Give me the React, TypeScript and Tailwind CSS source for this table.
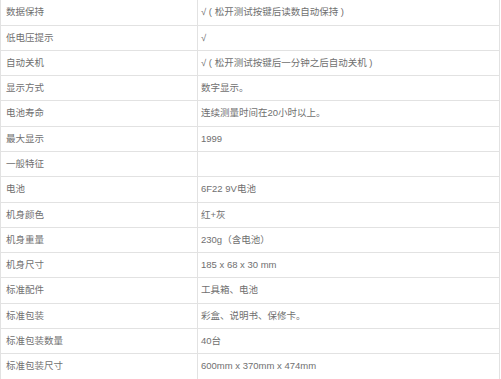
const rows: [string, string][] = [
  ['数据保持', '√ ( 松开测试按键后读数自动保持 )'],
  ['低电压提示', '√'],
  ['自动关机', '√ ( 松开测试按键后一分钟之后自动关机 )'],
  ['显示方式', '数字显示。'],
  ['电池寿命', '连续测量时间在20小时以上。'],
  ['最大显示', '1999'],
  ['一般特征', ''],
  ['电池', '6F22 9V电池'],
  ['机身颜色', '红+灰'],
  ['机身重量', '230g（含电池）'],
  ['机身尺寸', '185 x 68 x 30 mm'],
  ['标准配件', '工具箱、电池'],
  ['标准包装', '彩盒、说明书、保修卡。'],
  ['标准包装数量', '40台'],
  ['标准包装尺寸', '600mm x 370mm x 474mm'],
];

export default function App() {
  return (
    <div
      className="w-[501px] h-[379px] overflow-hidden bg-white text-[9.5px] text-[#707070]"
      style={{ fontFamily: '"Liberation Sans", "Noto Sans CJK SC", sans-serif' }}
    >
      <div className="w-[500px] border-x border-[#e2e2e2]">
        {rows.map(([k, v], i) => (
          <div
            key={i}
            className={`grid grid-cols-[197px_1fr] border-b border-[#e2e2e2] ${i === 0 ? 'h-[25.5px]' : 'h-[25.3px]'}`}
          >
            <div className="flex items-center pl-[5px] border-r border-[#e2e2e2]">{k}</div>
            <div className="flex items-center pl-[3px]">{v}</div>
          </div>
        ))}
      </div>
    </div>
  );
}
